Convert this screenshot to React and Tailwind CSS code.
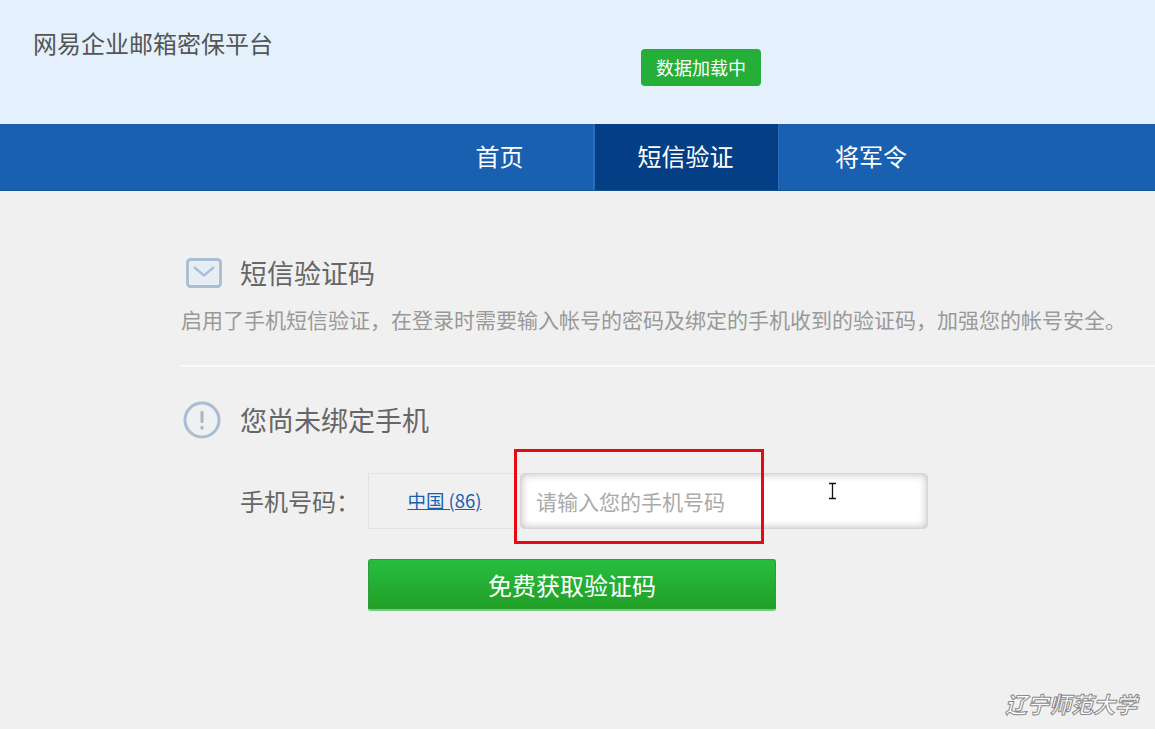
import React from 'react';

const navItems = [
  { label: '首页', className: 'w-[185px]' },
  { label: '短信验证', className: 'w-[186px] border-l-2 border-r border-l-[#2a6dba] border-r-[#2a6dba] bg-[#043f86]' },
  { label: '将军令', className: 'w-[186px]' },
];

const MailIcon = () => (
  <svg width="36" height="30" viewBox="0 0 36 30" fill="none">
    <rect x="1.5" y="1.5" width="33" height="27" rx="3" fill="#e6edf3" stroke="#a9bfd4" strokeWidth="3" />
    <path d="M8 9l10 8.5L28 9" stroke="#a9bfd4" strokeWidth="2.4" />
  </svg>
);

const InfoIcon = () => (
  <svg width="38" height="38" viewBox="0 0 38 38" fill="none">
    <circle cx="19" cy="19" r="17" fill="#eef0f2" stroke="#a9bdd2" strokeWidth="3" />
    <rect x="17.5" y="10" width="3" height="12" rx="1" fill="#a9b4bf" />
    <rect x="17.5" y="25" width="3" height="3.5" rx="1" fill="#a9b4bf" />
  </svg>
);

const App = () => {
  return (
    <div className="relative h-[729px] overflow-hidden bg-[#f0f0f0] font-['Noto_Sans_CJK_SC','Liberation_Sans',sans-serif]">
      <header className="flex h-[124px] items-start bg-[#e4f1fd] pl-[33px]">
        <h1 className="mt-[25px] w-[608px] shrink-0 text-[24px] leading-[36px] text-[#555]">网易企业邮箱密保平台</h1>
        <div className="mt-[49px] flex h-[37px] w-[120px] items-center justify-center rounded bg-[#25ae38] text-[18px] text-white">
          数据加载中
        </div>
      </header>

      <nav className="flex h-[67px] border-b border-[#15508f] bg-[#1a60b0] pl-[408px]">
        {navItems.map((item) => (
          <a
            key={item.label}
            className={`flex h-full items-center justify-center pb-[2px] pr-[2px] text-[24px] text-white ${item.className}`}
          >
            {item.label}
          </a>
        ))}
      </nav>

      <main className="pl-[181px] pt-[67px]">
        <div className="flex h-[30px] items-center pl-[5px]">
          <MailIcon />
          <h2 className="ml-[18px] text-[27px] leading-[36px] text-[#666]">短信验证码</h2>
        </div>
        <p className="mt-[16px] whitespace-nowrap text-[21px] leading-[30px] text-[#999]">
          启用了手机短信验证，在登录时需要输入帐号的密码及绑定的手机收到的验证码，加强您的帐号安全。
        </p>
        <div className="mt-[31px] border-t-2 border-[#fafafa]" />

        <div className="mt-[34px] flex h-[38px] items-center pl-[2px]">
          <InfoIcon />
          <h2 className="ml-[19px] text-[27px] leading-[36px] text-[#666]">您尚未绑定手机</h2>
        </div>

        <div className="mt-[34px] flex h-[56px] items-center pl-[59px]">
          <label className="w-[128px] shrink-0 text-[24px] text-[#666]">手机号码：</label>
          <div className="flex h-full w-[152px] items-center justify-center border border-r-0 border-[#e3e3e3]">
            <a className="text-[18.5px] text-[#1a60b0] underline">中国 (86)</a>
          </div>
          <input
            placeholder="请输入您的手机号码"
            className="h-full w-[408px] rounded border border-[#d6d6d6] bg-white px-[15px] text-[21px] shadow-[inset_0_0_8px_rgba(0,0,0,0.28)] outline-none placeholder:text-[#aaa]"
          />
        </div>

        <button className="ml-[187px] mt-[30px] flex h-[52px] w-[408px] items-center justify-center rounded-[3px] border border-[#2a9f3a] border-b-2 border-b-[#7cc77f] bg-gradient-to-b from-[#27bd40] to-[#229f26] text-[24px] text-white">
          免费获取验证码
        </button>
      </main>

      {/* annotation drawn over the form */}
      <div className="absolute left-[514px] top-[449px] h-[95px] w-[250px] border-[3px] border-[#e60b12]" />

      {/* text cursor */}
      <svg className="absolute left-[827px] top-[482px]" width="11" height="18" viewBox="0 0 11 18" fill="none">
        <path d="M2 1.5h7M5.5 1.5v15M2 16.5h7" stroke="#111" strokeWidth="1.3" />
      </svg>

      <div className="absolute left-[1005px] top-[689px] text-[22px] font-bold italic leading-[28px] text-white [-webkit-text-stroke:1px_#8a8a8a]">
        辽宁师范大学
      </div>
    </div>
  );
};

export default App;
